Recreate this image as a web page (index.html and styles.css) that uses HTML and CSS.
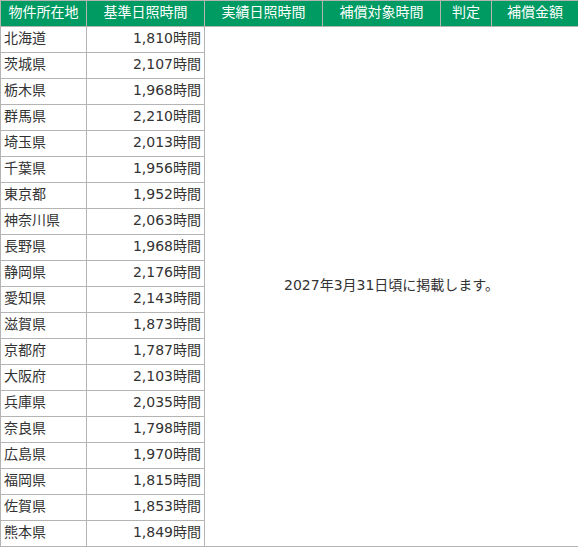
FILE: index.html
```html
<!DOCTYPE html>
<html lang="ja">
<head>
<meta charset="utf-8">
<link rel="stylesheet" href="styles.css">
</head>
<body>
<table class="sun">
<colgroup>
<col class="c1"><col class="c2"><col class="c3"><col class="c4"><col class="c5"><col class="c6">
</colgroup>
<thead>
<tr><th>物件所在地</th><th>基準日照時間</th><th>実績日照時間</th><th>補償対象時間</th><th>判定</th><th>補償金額</th></tr>
</thead>
<tbody>
<tr><td class="pref">北海道</td><td class="num">1,810時間</td><td class="note" colspan="4" rowspan="20">2027年3月31日頃に掲載します。</td></tr>
<tr><td class="pref">茨城県</td><td class="num">2,107時間</td></tr>
<tr><td class="pref">栃木県</td><td class="num">1,968時間</td></tr>
<tr><td class="pref">群馬県</td><td class="num">2,210時間</td></tr>
<tr><td class="pref">埼玉県</td><td class="num">2,013時間</td></tr>
<tr><td class="pref">千葉県</td><td class="num">1,956時間</td></tr>
<tr><td class="pref">東京都</td><td class="num">1,952時間</td></tr>
<tr><td class="pref">神奈川県</td><td class="num">2,063時間</td></tr>
<tr><td class="pref">長野県</td><td class="num">1,968時間</td></tr>
<tr><td class="pref">静岡県</td><td class="num">2,176時間</td></tr>
<tr><td class="pref">愛知県</td><td class="num">2,143時間</td></tr>
<tr><td class="pref">滋賀県</td><td class="num">1,873時間</td></tr>
<tr><td class="pref">京都府</td><td class="num">1,787時間</td></tr>
<tr><td class="pref">大阪府</td><td class="num">2,103時間</td></tr>
<tr><td class="pref">兵庫県</td><td class="num">2,035時間</td></tr>
<tr><td class="pref">奈良県</td><td class="num">1,798時間</td></tr>
<tr><td class="pref">広島県</td><td class="num">1,970時間</td></tr>
<tr><td class="pref">福岡県</td><td class="num">1,815時間</td></tr>
<tr><td class="pref">佐賀県</td><td class="num">1,853時間</td></tr>
<tr><td class="pref">熊本県</td><td class="num">1,849時間</td></tr>
</tbody>
</table>
</body>
</html>
```
FILE: styles.css
```css
html, body {
  margin: 0;
  padding: 0;
  background: #fff;
}
body {
  font-family: "DejaVu Sans", "Noto Sans CJK JP", sans-serif;
  font-size: 14px;
  color: #333;
}
.sun {
  border-collapse: collapse;
  table-layout: fixed;
  width: 578px;
}
.c1 { width: 86px; }
.c2 { width: 118px; }
.c3 { width: 118px; }
.c4 { width: 118px; }
.c5 { width: 51px; }
.c6 { width: 87px; }
.sun th, .sun td {
  border: 1px solid #b4b4b4;
  padding: 0 3px 3px;
  line-height: 16px;
  white-space: nowrap;
  overflow: hidden;
}
.sun tr { height: 26px; }
.sun th {
  background: #009b62;
  color: #fff;
  font-weight: normal;
  text-align: center;
}
.sun td.pref { text-align: left; }
.sun td.num { text-align: right; }
.sun td.note {
  text-align: center;
  vertical-align: middle;
}
```
